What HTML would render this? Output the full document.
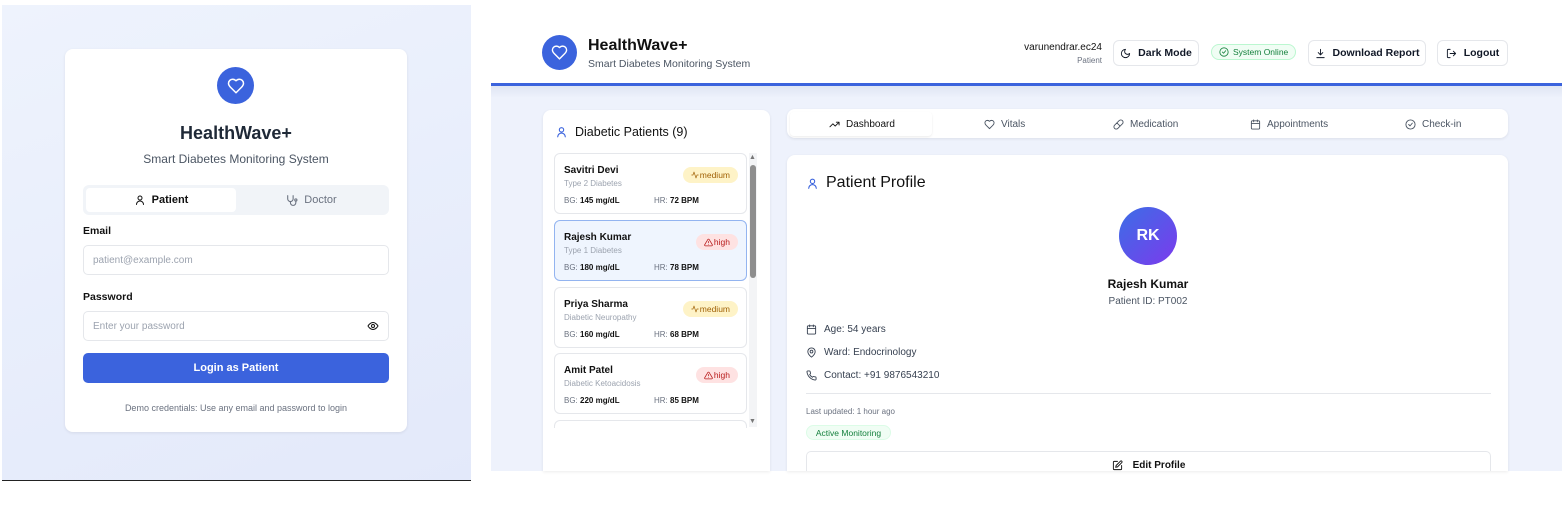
<!DOCTYPE html>
<html><head><meta charset="utf-8"><style>
*{box-sizing:border-box;margin:0;padding:0}
body{width:1568px;height:528px;background:#fff;font-family:"Liberation Sans",sans-serif;color:#1f2937;position:relative;overflow:hidden}
.a{position:absolute}
svg{display:block;flex:none}
.ic{fill:none;stroke:currentColor;stroke-width:2;stroke-linecap:round;stroke-linejoin:round}
.card{background:#fff;border-radius:8px;box-shadow:0 1px 3px rgba(0,0,0,.08)}
.btn{position:absolute;top:40px;height:26px;border:1px solid #e5e7eb;border-radius:6px;background:#fff;font-size:10.5px;font-weight:bold;display:flex;align-items:center;justify-content:center;gap:7px;white-space:nowrap;color:#111827}
.pc{position:absolute;left:554px;width:193px;height:61px;border:1px solid #e5e7eb;border-radius:6px;background:#fff}
.pc .n{position:absolute;left:9px;top:11px;font-size:10px;font-weight:bold;color:#111}
.pc .t{position:absolute;left:9px;top:25px;font-size:8px;color:#9ca3af}
.pc .bg{position:absolute;left:9px;top:42px;font-size:8px;color:#6b7280}
.pc .hr{position:absolute;left:99px;top:42px;font-size:8px;color:#6b7280}
.pc b{color:#111}
.bd{position:absolute;right:8px;top:13px;height:16px;border-radius:8px;font-size:8.5px;padding:0 8px;display:flex;align-items:center;gap:1px}
.med{background:#fef3c7;color:#a16207}
.hi{background:#fee2e2;color:#b91c1c}
.tab{position:absolute;top:119px;font-size:10px;color:#4b5563;display:flex;align-items:center;gap:6px}
.row{position:absolute;left:806px;font-size:10px;color:#374151;display:flex;align-items:center;gap:7px}
</style></head><body>
<div class="a" style="left:2px;top:5px;width:469px;height:475px;background:linear-gradient(160deg,#eef3fd,#e3e9fa)"></div>
<div class="a" style="left:2px;top:480px;width:469px;height:1px;background:#222"></div>
<div class="a card" style="left:65px;top:49px;width:342px;height:383px"></div>
<div class="a" style="left:217px;top:67px;width:37px;height:37px;border-radius:50%;background:#3b63dd;display:flex;align-items:center;justify-content:center;color:#fff"><svg width="18" height="18" viewBox="0 0 24 24" class="ic"><path d="M19 14c1.5-1.5 3-3.2 3-5.5A5.5 5.5 0 0 0 16.5 3c-1.8 0-3 .5-4.5 2-1.5-1.5-2.7-2-4.5-2A5.5 5.5 0 0 0 2 8.5c0 2.3 1.5 4 3 5.5l7 7Z"/></svg></div>
<div class="a" style="left:65px;width:342px;top:123px;text-align:center;font-size:18px;font-weight:bold;color:#1f2937">HealthWave+</div>
<div class="a" style="left:65px;width:342px;top:152px;text-align:center;font-size:12px;color:#4b5563">Smart Diabetes Monitoring System</div>
<div class="a" style="left:83px;top:185px;width:306px;height:30px;background:#f1f4f8;border-radius:6px"></div>
<div class="a" style="left:86px;top:188px;width:150px;height:24px;background:#fff;border-radius:4px;display:flex;align-items:center;justify-content:center;gap:6px;font-size:11px;font-weight:bold;color:#111"><svg width="12" height="12" viewBox="0 0 24 24" class="ic"><circle cx="12" cy="8" r="4"/><path d="M5 21a7 7 0 0 1 14 0"/></svg>Patient</div>
<div class="a" style="left:236px;top:188px;width:150px;height:24px;display:flex;align-items:center;justify-content:center;gap:6px;font-size:11px;color:#6b7280"><svg width="13" height="13" viewBox="0 0 24 24" class="ic"><path d="M5 3v6a5 5 0 0 0 10 0V3"/><path d="M10 14v2a5 5 0 0 0 10 0v-3"/><circle cx="20" cy="11" r="2"/></svg>Doctor</div>
<div class="a" style="left:83px;top:225px;font-size:10.5px;font-weight:bold;color:#111">Email</div>
<div class="a" style="left:83px;top:245px;width:306px;height:30px;border:1px solid #e5e7eb;border-radius:5px;font-size:10px;color:#9ca3af;padding:9px 9px">patient@example.com</div>
<div class="a" style="left:83px;top:291px;font-size:10.5px;font-weight:bold;color:#111">Password</div>
<div class="a" style="left:83px;top:311px;width:306px;height:30px;border:1px solid #e5e7eb;border-radius:5px;font-size:10px;color:#9ca3af;padding:9px 9px">Enter your password</div>
<div class="a" style="left:367px;top:320px;color:#111"><svg width="12" height="12" viewBox="0 0 24 24" class="ic"><path d="M2 12s4-7 10-7 10 7 10 7-4 7-10 7S2 12 2 12Z"/><circle cx="12" cy="12" r="3"/></svg></div>
<div class="a" style="left:83px;top:353px;width:306px;height:30px;background:#3b63dd;border-radius:5px;color:#fff;font-size:11px;font-weight:bold;text-align:center;line-height:30px">Login as Patient</div>
<div class="a" style="left:65px;width:342px;top:403px;text-align:center;font-size:9px;color:#6b7280">Demo credentials: Use any email and password to login</div>

<div class="a" style="left:491px;top:0;width:1071px;height:471px;background:#eef2fc"></div>
<div class="a" style="left:491px;top:0;width:1071px;height:84px;background:#fff"></div>
<div class="a" style="left:491px;top:83px;width:1071px;height:3px;background:#3b63dd"></div>
<div class="a" style="left:491px;top:86px;width:1071px;height:12px;background:linear-gradient(#dfe5f3,#eef2fc)"></div>
<div class="a" style="left:542px;top:35px;width:35px;height:35px;border-radius:50%;background:#3b63dd;display:flex;align-items:center;justify-content:center;color:#fff"><svg width="17" height="17" viewBox="0 0 24 24" class="ic"><path d="M19 14c1.5-1.5 3-3.2 3-5.5A5.5 5.5 0 0 0 16.5 3c-1.8 0-3 .5-4.5 2-1.5-1.5-2.7-2-4.5-2A5.5 5.5 0 0 0 2 8.5c0 2.3 1.5 4 3 5.5l7 7Z"/></svg></div>
<div class="a" style="left:588px;top:37px;font-size:16px;font-weight:bold;color:#111">HealthWave+</div>
<div class="a" style="left:588px;top:58px;font-size:10.5px;color:#4b5563">Smart Diabetes Monitoring System</div>
<div class="a" style="left:1000px;width:102px;top:42px;text-align:right;font-size:10px;color:#111">varunendrar.ec24</div>
<div class="a" style="left:1000px;width:102px;top:56px;text-align:right;font-size:8px;color:#6b7280">Patient</div>
<div class="btn" style="left:1113px;width:86px"><svg width="11" height="11" viewBox="0 0 24 24" class="ic"><path d="M12 3a6 6 0 0 0 9 9 9 9 0 1 1-9-9Z"/></svg>Dark Mode</div>
<div class="a" style="left:1211px;top:44px;width:85px;height:16px;border:1px solid #bbf7d0;background:#f0fdf4;border-radius:8px;font-size:8.5px;color:#15803d;display:flex;align-items:center;gap:4px;padding-left:7px;white-space:nowrap"><svg width="10" height="10" viewBox="0 0 24 24" class="ic"><circle cx="12" cy="12" r="10"/><path d="m8 12 3 3 5-6"/></svg>System Online</div>
<div class="btn" style="left:1308px;width:118px"><svg width="11" height="11" viewBox="0 0 24 24" class="ic"><path d="M12 3v12m-5-5 5 5 5-5M4 21h16"/></svg>Download Report</div>
<div class="btn" style="left:1437px;width:71px"><svg width="11" height="11" viewBox="0 0 24 24" class="ic"><path d="M9 21H5a2 2 0 0 1-2-2V5a2 2 0 0 1 2-2h4M16 17l5-5-5-5M21 12H9"/></svg>Logout</div>

<div class="a card" style="left:543px;top:110px;width:227px;height:361px;border-radius:8px 8px 0 0"></div>
<div class="a" style="left:555px;top:125px;display:flex;align-items:center;gap:7px;font-size:12.5px;color:#111"><svg width="13" height="14" viewBox="0 0 24 24" class="ic" style="color:#3b63dd"><circle cx="12" cy="8" r="4"/><path d="M5 21a7 7 0 0 1 14 0"/></svg>Diabetic Patients (9)</div>
<div class="pc" style="top:153px"><div class="n">Savitri Devi</div><div class="t">Type 2 Diabetes</div><div class="bg">BG: <b>145 mg/dL</b></div><div class="hr">HR: <b>72 BPM</b></div><div class="bd med"><svg width="8" height="8" viewBox="0 0 24 24" class="ic"><path d="M22 12h-4l-3 9L9 3l-3 9H2"/></svg>medium</div></div>
<div class="pc" style="top:220px;background:#eff5fe;border-color:#93b4f0"><div class="n">Rajesh Kumar</div><div class="t">Type 1 Diabetes</div><div class="bg">BG: <b>180 mg/dL</b></div><div class="hr">HR: <b>78 BPM</b></div><div class="bd hi"><svg width="9" height="9" viewBox="0 0 24 24" class="ic"><path d="M10.3 3.9 1.8 18a2 2 0 0 0 1.7 3h17a2 2 0 0 0 1.7-3L13.7 3.9a2 2 0 0 0-3.4 0ZM12 9v4M12 17h0"/></svg>high</div></div>
<div class="pc" style="top:287px"><div class="n">Priya Sharma</div><div class="t">Diabetic Neuropathy</div><div class="bg">BG: <b>160 mg/dL</b></div><div class="hr">HR: <b>68 BPM</b></div><div class="bd med"><svg width="8" height="8" viewBox="0 0 24 24" class="ic"><path d="M22 12h-4l-3 9L9 3l-3 9H2"/></svg>medium</div></div>
<div class="pc" style="top:353px"><div class="n">Amit Patel</div><div class="t">Diabetic Ketoacidosis</div><div class="bg">BG: <b>220 mg/dL</b></div><div class="hr">HR: <b>85 BPM</b></div><div class="bd hi"><svg width="9" height="9" viewBox="0 0 24 24" class="ic"><path d="M10.3 3.9 1.8 18a2 2 0 0 0 1.7 3h17a2 2 0 0 0 1.7-3L13.7 3.9a2 2 0 0 0-3.4 0ZM12 9v4M12 17h0"/></svg>high</div></div>
<div class="pc" style="top:420px;height:8px;border-bottom:none;border-radius:6px 6px 0 0"></div>
<div class="a" style="left:749px;top:153px;width:8px;height:274px;background:#f3f4f6"></div>
<div class="a" style="left:750px;top:165px;width:6px;height:113px;background:#8e8e8e;border-radius:3px"></div>
<div class="a" style="left:749px;top:154px;font-size:7px;color:#777">▲</div>
<div class="a" style="left:749px;top:418px;font-size:7px;color:#777">▼</div>

<div class="a card" style="left:787px;top:109px;width:721px;height:29px"></div>
<div class="a" style="left:790px;top:112px;width:142px;height:24px;background:#fff;box-shadow:0 1px 2px rgba(0,0,0,.08);border-radius:4px"></div>
<div class="tab" style="left:829px;color:#111"><svg width="11" height="11" viewBox="0 0 24 24" class="ic"><path d="m22 7-8.5 8.5-5-5L2 17M16 7h6v6"/></svg>Dashboard</div>
<div class="tab" style="left:984px"><svg width="11" height="11" viewBox="0 0 24 24" class="ic"><path d="M19 14c1.5-1.5 3-3.2 3-5.5A5.5 5.5 0 0 0 16.5 3c-1.8 0-3 .5-4.5 2-1.5-1.5-2.7-2-4.5-2A5.5 5.5 0 0 0 2 8.5c0 2.3 1.5 4 3 5.5l7 7Z"/></svg>Vitals</div>
<div class="tab" style="left:1113px"><svg width="11" height="11" viewBox="0 0 24 24" class="ic"><path d="m10.5 20.5 10-10a4.95 4.95 0 1 0-7-7l-10 10a4.95 4.95 0 1 0 7 7ZM8.5 8.5l7 7"/></svg>Medication</div>
<div class="tab" style="left:1250px"><svg width="11" height="11" viewBox="0 0 24 24" class="ic"><rect x="3" y="4" width="18" height="18" rx="2"/><path d="M16 2v4M8 2v4M3 10h18"/></svg>Appointments</div>
<div class="tab" style="left:1405px"><svg width="11" height="11" viewBox="0 0 24 24" class="ic"><circle cx="12" cy="12" r="10"/><path d="m8 12 3 3 5-6"/></svg>Check-in</div>

<div class="a card" style="left:787px;top:155px;width:721px;height:316px;border-radius:8px 8px 0 0"></div>
<div class="a" style="left:806px;top:174px;display:flex;align-items:center;gap:7px;font-size:16px;color:#111"><svg width="13" height="15" viewBox="0 0 24 24" class="ic" style="color:#3b63dd"><circle cx="12" cy="8" r="4"/><path d="M5 21a7 7 0 0 1 14 0"/></svg>Patient Profile</div>
<div class="a" style="left:1119px;top:207px;width:58px;height:58px;border-radius:50%;background:linear-gradient(135deg,#3b6ee6,#7c3aed);color:#fff;font-weight:bold;font-size:16px;text-align:center;line-height:58px">RK</div>
<div class="a" style="left:1048px;width:200px;top:277px;text-align:center;font-size:12px;font-weight:bold;color:#111">Rajesh Kumar</div>
<div class="a" style="left:1048px;width:200px;top:296px;text-align:center;font-size:10px;color:#4b5563">Patient ID: PT002</div>
<div class="row" style="top:324px"><svg width="11" height="11" viewBox="0 0 24 24" class="ic"><rect x="3" y="4" width="18" height="18" rx="2"/><path d="M16 2v4M8 2v4M3 10h18"/></svg>Age: 54 years</div>
<div class="row" style="top:347px"><svg width="11" height="11" viewBox="0 0 24 24" class="ic"><path d="M20 10c0 6-8 12-8 12s-8-6-8-12a8 8 0 0 1 16 0Z"/><circle cx="12" cy="10" r="3"/></svg>Ward: Endocrinology</div>
<div class="row" style="top:370px"><svg width="11" height="11" viewBox="0 0 24 24" class="ic"><path d="M22 16.9v3a2 2 0 0 1-2.2 2 19.8 19.8 0 0 1-8.6-3.1 19.5 19.5 0 0 1-6-6A19.8 19.8 0 0 1 2.1 4.2 2 2 0 0 1 4.1 2h3a2 2 0 0 1 2 1.7c.1 1 .4 1.9.7 2.8a2 2 0 0 1-.5 2.1L8 9.9a16 16 0 0 0 6 6l1.3-1.3a2 2 0 0 1 2.1-.4c.9.3 1.8.6 2.8.7a2 2 0 0 1 1.7 2Z"/></svg>Contact: +91 9876543210</div>
<div class="a" style="left:806px;top:393px;width:685px;height:1px;background:#e5e7eb"></div>
<div class="a" style="left:806px;top:407px;font-size:8px;color:#6b7280">Last updated: 1 hour ago</div>
<div class="a" style="left:806px;top:425px;width:85px;height:15px;border:1px solid #dcfce7;background:#f0fdf4;border-radius:8px;font-size:8.5px;color:#15803d;text-align:center;line-height:14px">Active Monitoring</div>
<div class="a" style="left:806px;top:451px;width:685px;height:20px;border:1px solid #e5e7eb;border-bottom:none;border-radius:5px 5px 0 0;display:flex;justify-content:center;align-items:center;gap:10px;font-size:10px;font-weight:bold;color:#111;padding-top:7px"><svg width="11" height="11" viewBox="0 0 24 24" class="ic"><path d="M12 3H5a2 2 0 0 0-2 2v14a2 2 0 0 0 2 2h14a2 2 0 0 0 2-2v-7"/><path d="M18.4 2.6a2.1 2.1 0 1 1 3 3L12 15l-4 1 1-4Z"/></svg>Edit Profile</div>
</body></html>
